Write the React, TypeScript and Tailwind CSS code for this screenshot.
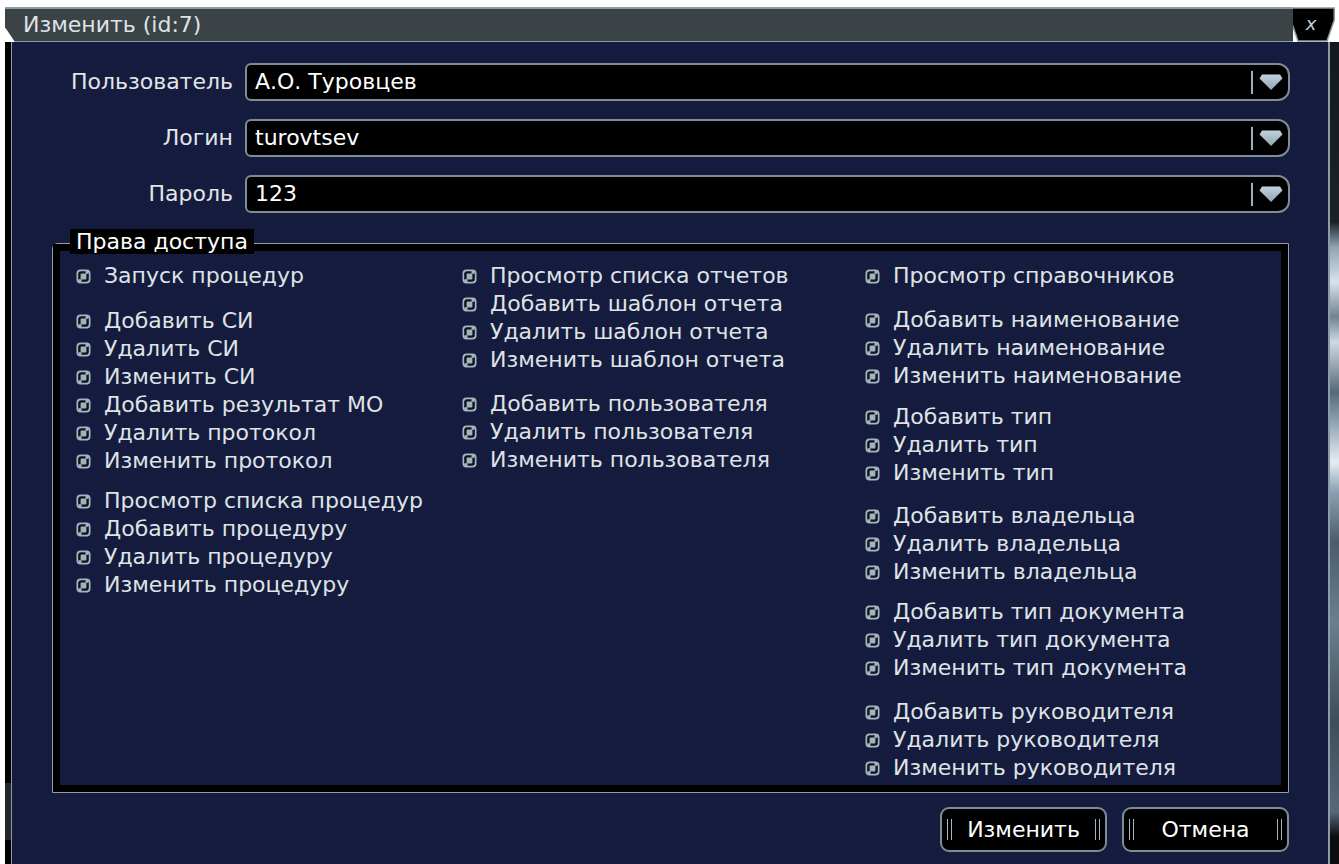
import React from "react";

type Group = { gap: string; items: string[] };

const col1: Group[] = [
  { gap: "", items: ["Запуск процедур"] },
  {
    gap: "mt-[17px]",
    items: [
      "Добавить СИ",
      "Удалить СИ",
      "Изменить СИ",
      "Добавить результат МО",
      "Удалить протокол",
      "Изменить протокол",
    ],
  },
  {
    gap: "mt-[12px]",
    items: ["Просмотр списка процедур", "Добавить процедуру", "Удалить процедуру", "Изменить процедуру"],
  },
];

const col2: Group[] = [
  {
    gap: "",
    items: ["Просмотр списка отчетов", "Добавить шаблон отчета", "Удалить шаблон отчета", "Изменить шаблон отчета"],
  },
  { gap: "mt-[16px]", items: ["Добавить пользователя", "Удалить пользователя", "Изменить пользователя"] },
];

const col3: Group[] = [
  { gap: "", items: ["Просмотр справочников"] },
  { gap: "mt-[16px]", items: ["Добавить наименование", "Удалить наименование", "Изменить наименование"] },
  { gap: "mt-[13px]", items: ["Добавить тип", "Удалить тип", "Изменить тип"] },
  { gap: "mt-[15px]", items: ["Добавить владельца", "Удалить владельца", "Изменить владельца"] },
  { gap: "mt-[12px]", items: ["Добавить тип документа", "Удалить тип документа", "Изменить тип документа"] },
  { gap: "mt-[16px]", items: ["Добавить руководителя", "Удалить руководителя", "Изменить руководителя"] },
];

// skinned checkbox (unchecked state)
function CheckIcon() {
  return (
    <svg width="15" height="15" viewBox="0 0 15 15" className="shrink-0">
      <rect x="0.5" y="0.5" width="14" height="14" rx="4" fill="#a3b6c1" />
      <rect x="2.2" y="2.2" width="10.6" height="10.6" rx="3" fill="#10131d" />
      <rect x="4.6" y="4.6" width="5.8" height="5.8" rx="1" fill="#9fb4c0" />
      <rect x="9.5" y="1.8" width="3" height="3" fill="#a3b6c1" />
      <rect x="2.5" y="10.2" width="3" height="3" fill="#a3b6c1" />
    </svg>
  );
}

function Column({ groups }: { groups: Group[] }) {
  return (
    <div className="flex flex-col">
      {groups.map((g, i) => (
        <div key={i} className={`flex flex-col ${g.gap}`}>
          {g.items.map((t) => (
            <div key={t} className="flex items-center h-[28px] gap-[13px] whitespace-nowrap">
              <CheckIcon />
              <span>{t}</span>
            </div>
          ))}
        </div>
      ))}
    </div>
  );
}

function DropArrow() {
  return (
    <svg width="24" height="18" viewBox="0 0 24 18" className="shrink-0">
      <defs>
        <linearGradient id="arr" x1="0" y1="0" x2="0" y2="1">
          <stop offset="0" stopColor="#c2d4df" />
          <stop offset="1" stopColor="#8ea4b1" />
        </linearGradient>
      </defs>
      <path d="M3 1.5 H21 L23.5 5.5 L12 17 L0.5 5.5 Z" fill="url(#arr)" />
    </svg>
  );
}

function Field({ label, value }: { label: string; value: string }) {
  return (
    <div className="flex items-center h-[38px]">
      <span className="w-[221px] shrink-0 text-right">{label}</span>
      <div className="ml-[12px] mr-[38px] flex-1 h-full flex items-center bg-black border-2 border-[#7b8d97] rounded-l-[6px] rounded-r-[12px] pl-[8px] pr-[5px]">
        <span className="flex-1 text-white">{value}</span>
        <span className="w-[2px] h-[23px] bg-[#9db2be] mr-[6px]" />
        <DropArrow />
      </div>
    </div>
  );
}

function Bars() {
  return (
    <div className="flex gap-[3px] shrink-0">
      <span className="w-[1px] h-[21px] bg-[#a3b6c1]" />
      <span className="w-[1px] h-[21px] bg-[#a3b6c1]" />
    </div>
  );
}

function Button({ children }: { children: React.ReactNode }) {
  return (
    <div className="w-[167px] h-[45px] bg-black border-2 border-[#7b8d97] rounded-[9px] flex items-center px-[5px]">
      <Bars />
      <span className="flex-1 text-center text-white">{children}</span>
      <Bars />
    </div>
  );
}

function CloseButton() {
  return (
    <svg width="45" height="35" viewBox="0 0 45 35" className="shrink-0">
      <polygon points="0.75,1 44.25,1 44.25,13 37,34 8,34 0.75,13" fill="#000" stroke="#8b9ca4" strokeWidth="1.5" />
      <text x="21" y="23" textAnchor="middle" fontSize="18" fontStyle="italic" fill="#c9d1d5" fontFamily="DejaVu Sans, sans-serif">
        x
      </text>
    </svg>
  );
}

export default function App() {
  return (
    <div className="w-[1339px] h-[864px] overflow-hidden bg-white flex flex-col font-['DejaVu_Sans',sans-serif] text-[22px] leading-none text-[#e2e6e8]">
      <div className="h-[7px] shrink-0" />

      {/* title bar */}
      <div className="flex h-[35px] shrink-0">
        <div className="w-[5px] shrink-0" />
        <div className="flex-1 -mr-[3px] bg-[#3b4346] border-t-2 border-b border-[#8b9ca4] [clip-path:polygon(0_0,100%_0,100%_100%,10px_100%,0_58%)] flex items-center pl-[18px] text-[#dfe3e5]">
          Изменить (id:7)
        </div>
        <CloseButton />
        <div className="w-[4px] shrink-0" />
      </div>

      <div className="flex flex-1 min-h-0">
        <div className="w-[5px] shrink-0 bg-white" />
        <div className="w-[6px] shrink-0 flex flex-col">
          <div className="flex-1 bg-black" />
          <div className="h-[57px] bg-[#22272a]" />
          <div className="h-[24px] bg-black" />
        </div>

        {/* dialog body */}
        <div className="flex-1 flex flex-col border-l border-r-2 border-[#8b9ca6] bg-[#151b3d] bg-[image:repeating-conic-gradient(#171d40_0%_25%,#141a3b_0%_50%)] bg-[length:2px_2px] pt-[21px]">
          <div className="flex flex-col gap-[18px]">
            <Field label="Пользователь" value="А.О. Туровцев" />
            <Field label="Логин" value="turovtsev" />
            <Field label="Пароль" value="123" />
          </div>

          <div className="relative mt-[30px] ml-[40px] mr-[39px] h-[550px] border border-[#8d9fa9] rounded-tl-[6px]">
            <div className="h-full border-[7px] border-black grid grid-cols-[386px_403px_1fr] pt-[11px] pl-[16px] text-[#dfe3e6]">
              <Column groups={col1} />
              <Column groups={col2} />
              <Column groups={col3} />
            </div>
            <span className="absolute top-[-15px] left-[17px] h-[25px] px-[6px] bg-black leading-[25px] text-white">
              Права доступа
            </span>
          </div>

          <div className="mt-[14px] mr-[39px] flex justify-end gap-[15px]">
            <Button>Изменить</Button>
            <Button>Отмена</Button>
          </div>
        </div>

        {/* desktop wallpaper showing at the edge */}
        <div className="w-[9px] shrink-0 bg-[linear-gradient(to_bottom,#15191d_0px,#1c2226_180px,#8fa3b3_205px,#d8e2ea_240px,#6f8392_275px,#cfdbe3_300px,#55697a_350px,#8fa3b3_380px,#e6edf2_420px,#8aa0b0_450px,#4b5d6c_500px,#6b7f8f_580px,#3e4e5b_680px,#56687a_770px,#0a0c0e_795px)]" />
      </div>
    </div>
  );
}
